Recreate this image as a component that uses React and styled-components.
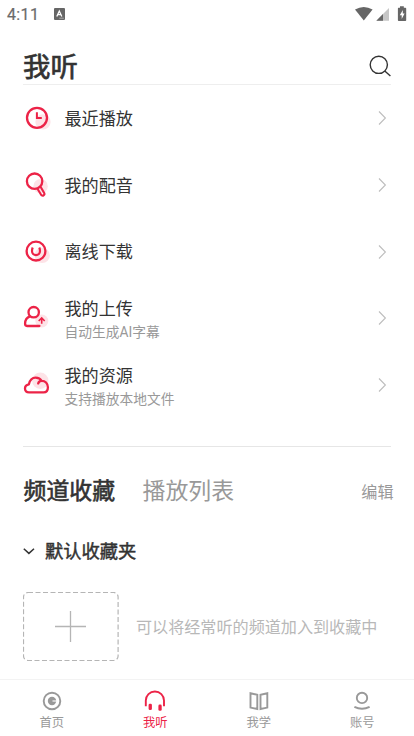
import React, { useState } from 'react'
import styled, { createGlobalStyle } from 'styled-components'

const GlobalStyle = createGlobalStyle`
  * {
    box-sizing: border-box;
  }

  body {
    margin: 0;
    background: #ffffff;
    font-family: Roboto, 'Noto Sans CJK SC', sans-serif;
    color: #333333;
  }

  svg {
    display: block;
    flex: none;
  }

  button {
    border: 0;
    padding: 0;
    background: none;
    font: inherit;
    color: inherit;
    cursor: pointer;
  }
`

const Screen = styled.div`
  display: flex;
  flex-direction: column;
  width: 414px;
  height: 736px;
  overflow: hidden;
`

const StatusBar = styled.div`
  display: flex;
  align-items: center;
  height: 28px;
  padding: 0 7px;
  color: #6b6b6b;
`

const Clock = styled.span`
  width: 47px;
  padding-top: 1px;
  font-size: 16px;
  line-height: 20px;
  letter-spacing: 0.35px;
  -webkit-text-stroke: 0.2px #6b6b6b;
`

const StatusIcons = styled.div`
  display: flex;
  align-items: center;
  margin-left: auto;
`

const Header = styled.header`
  display: flex;
  align-items: center;
  justify-content: space-between;
  height: 57px;
  margin: 0 23px;
  padding-top: 19px;
  border-bottom: 1px solid #eeeeee;
`

const Title = styled.h1`
  margin: 0;
  padding-top: 4px;
  font-size: 27.4px;
  line-height: 34px;
  font-weight: 400;
  -webkit-text-stroke: 0.7px #333333;
`

const Menu = styled.div`
  display: flex;
  flex-direction: column;
  height: 362px;
  margin: 0 23px;
  border-bottom: 1px solid #e6e6e6;
`

const MenuRow = styled.button`
  display: flex;
  align-items: center;
  height: 66.7px;
  text-align: left;
`

const MenuText = styled.div`
  display: flex;
  flex-direction: column;
  flex: 1;
  margin-left: 11.5px;
  padding-top: ${props => (props.$hasNote ? '4px' : '1.4px')};
`

const MenuTitle = styled.span`
  font-size: 17.1px;
  line-height: 24px;
`

const MenuNote = styled.span`
  font-size: 13.75px;
  line-height: 23px;
  color: #999999;
`

const Tabs = styled.div`
  display: flex;
  align-items: center;
  height: 86px;
  padding: 3px 20.5px 0 23.5px;
`

const Tab = styled.button`
  margin-right: 27.5px;
  font-size: 22.9px;
  line-height: 30px;
  color: ${props => (props.$active ? '#333333' : '#999999')};
  -webkit-text-stroke: ${props => (props.$active ? '0.6px #333333' : '0')};
`

const EditButton = styled.button`
  margin-left: auto;
  padding-bottom: 2px;
  font-size: 16.1px;
  color: #999999;
`

const FolderHeader = styled.div`
  display: flex;
  align-items: center;
  gap: 10px;
  height: 35px;
  padding-left: 23px;
`

const FolderName = styled.span`
  padding-top: 2px;
  font-size: 18.3px;
  line-height: 26px;
  -webkit-text-stroke: 0.45px #333333;
`

const EmptyFolder = styled.div`
  display: flex;
  align-items: center;
  gap: 17px;
  margin-top: 24px;
  padding-left: 23px;
  color: #b8b8b8;
`

const Hint = styled.span`
  padding-top: 2px;
  font-size: 16.1px;
  line-height: 24px;
`

const TabBar = styled.nav`
  display: flex;
  height: 57px;
  margin-top: auto;
  border-top: 1px solid #f3f3f3;
`

const TabBarItem = styled.button`
  display: flex;
  flex: 1;
  flex-direction: column;
  align-items: center;
  padding-top: 10px;
  font-size: 12.3px;
  line-height: 18px;
  color: ${props => (props.$active ? '#ec2347' : '#999999')};

  svg {
    margin-bottom: 2px;
  }
`

// Red outline drawing over a soft pink disc
const RowIcon = ({ halo, children }) => (
  <svg width="30" height="30" viewBox="0 0 30 30" fill="none">
    <circle cx={halo[0]} cy={halo[1]} r={halo[2]} fill="#fde3e7" />
    <g
      stroke="#ec2347"
      strokeWidth="2.3"
      strokeLinecap="round"
      strokeLinejoin="round"
    >
      {children}
    </g>
  </svg>
)

const menu = [
  {
    title: '最近播放',
    icon: (
      <RowIcon halo={[20, 18.9, 7.6]}>
        <circle cx="14" cy="14.8" r="10" />
        <path d="M13.9 10.3V15.1H17.8" strokeWidth="2" strokeLinecap="square" strokeLinejoin="miter" />
      </RowIcon>
    )
  },
  {
    title: '我的配音',
    icon: (
      <RowIcon halo={[17.6, 16.2, 7.2]}>
        <circle cx="11.6" cy="11.2" r="7.7" />
        <path d="M14.6 19 18.1 24.7A1.7 1.7 0 0 0 21.2 23.1L18 17.4" strokeWidth="2.1" />
      </RowIcon>
    )
  },
  {
    title: '离线下载',
    icon: (
      <RowIcon halo={[19.2, 18.4, 7.7]}>
        <circle cx="13" cy="14.1" r="9.4" />
        <path
          d="M9.7 10.5Q9 12.1 9 14.1A4 4 0 0 0 17 14.1Q17 12.1 16.3 10.5"
          strokeWidth="2.2"
          strokeLinecap="butt"
        />
      </RowIcon>
    )
  },
  {
    title: '我的上传',
    note: '自动生成AI字幕',
    icon: (
      <RowIcon halo={[18.8, 18, 6.5]}>
        <circle cx="10.7" cy="9.2" r="5.2" />
        <path d="M7 13.4C3.8 14.6 2.1 17.3 2.1 20.5V21.1Q2.1 23 4 23H16.4" />
        <path d="M18.7 20.8V15.4M15.7 18 18.7 15 21.7 18" strokeWidth="1.6" strokeLinecap="butt" strokeLinejoin="miter" />
      </RowIcon>
    )
  },
  {
    title: '我的资源',
    note: '支持播放本地文件',
    icon: (
      <RowIcon halo={[17.3, 10.7, 8.2]}>
        <path d="M6 22.4C3.4 22.4 2 20.8 2 18.6 2 16.2 3.8 14.8 5.8 14.4 6.8 10.2 9.3 7.6 12.6 7.6 15.4 7.6 17.4 8.6 18.6 10.8 22 10.6 24.9 13.4 24.9 17.2 24.9 20.4 23.2 22.4 20.6 22.4ZM18.6 10.8C16.6 11 15.5 12 15.2 13.4" />
      </RowIcon>
    )
  }
]

const tabBar = [
  {
    label: '首页',
    icon: (
      <>
        <circle cx="11" cy="11" r="8.3" />
        <circle cx="11" cy="11" r="4.2" fill="currentColor" stroke="none" />
        <path d="M11.5 11H15.6" stroke="#ffffff" strokeWidth="1.1" />
      </>
    )
  },
  {
    label: '我听',
    icon: (
      <>
        <path d="M1.8 16.3V10.6A9.1 9.1 0 0 1 20 10.6V16.3" />
        <rect x="4.6" y="13.8" width="3.3" height="6.2" rx="1.3" fill="currentColor" stroke="none" />
        <rect x="14.4" y="14.6" width="3.3" height="6.2" rx="1.3" fill="currentColor" stroke="none" />
      </>
    )
  },
  {
    label: '我学',
    icon: (
      <path d="M2.5 3.2 9.3 4.7V19L2.5 17.6ZM19.3 3.2 12.5 4.7V19L19.3 17.6Z" />
    )
  },
  {
    label: '账号',
    icon: (
      <>
        <circle cx="11" cy="7.9" r="5.2" />
        <path d="M3.4 16.9Q11 20.7 18.6 16.9" />
      </>
    )
  }
]

const ChevronRight = () => (
  <svg width="18" height="16" viewBox="0 0 18 16" fill="none" stroke="#bdbdbd" strokeWidth="1.1">
    <path d="M6 1.5 12.4 8 6 14.5" />
  </svg>
)

const App = () => {
  const [activeTab, setActiveTab] = useState('频道收藏')
  const [activePage, setActivePage] = useState('我听')

  return (
    <Screen>
      <GlobalStyle />
      <StatusBar>
        <Clock>4:11</Clock>
        <svg width="11" height="12" viewBox="0 0 11 12">
          <rect width="11" height="12" rx="1" fill="#666666" />
          <path d="M2.8 8.5 5.3 3 7.8 8.5M3.8 6.7H6.8" fill="none" stroke="#ffffff" strokeWidth="1.3" />
          <path d="M5.3 10.2H9.8" stroke="#cccccc" strokeWidth="0.7" />
        </svg>
        <StatusIcons>
          <svg width="52" height="16" viewBox="0 0 52 16" fill="#666666">
            <path d="M0 3.6Q8.7-1.8 17.6 3.6L8.8 14.6Z" />
            <path d="M34 2V14.8H21.3Z" fill="#c6c6c6" />
            <path d="M28 8V14.8H21.3Z" />
            <path d="M43.5 1.8H45V.2H48.8V1.8H50.4Q51.2 1.8 51.2 2.6V14.2Q51.2 15 50.4 15H43.7Q42.9 15 42.9 14.2V2.6Q42.9 1.8 43.5 1.8Z" />
            <path d="M47.8 4 44.8 9.2H46.7V13L49.6 7.6H47.8Z" fill="#ffffff" />
          </svg>
        </StatusIcons>
      </StatusBar>
      <Header>
        <Title>我听</Title>
        <svg width="23" height="22" viewBox="0 0 23 22" fill="none" stroke="#333333" strokeWidth="1.4">
          <circle cx="10.8" cy="9.8" r="8.6" />
          <path d="M16.8 15.9 22.4 21" />
        </svg>
      </Header>
      <Menu>
        {menu.map(item => (
          <MenuRow key={item.title}>
            {item.icon}
            <MenuText $hasNote={Boolean(item.note)}>
              <MenuTitle>{item.title}</MenuTitle>
              {item.note && <MenuNote>{item.note}</MenuNote>}
            </MenuText>
            <ChevronRight />
          </MenuRow>
        ))}
      </Menu>
      <Tabs>
        {['频道收藏', '播放列表'].map(tab => (
          <Tab key={tab} $active={tab === activeTab} onClick={() => setActiveTab(tab)}>
            {tab}
          </Tab>
        ))}
        <EditButton>编辑</EditButton>
      </Tabs>
      <FolderHeader>
        <svg width="12" height="8" viewBox="0 0 12 8" fill="none" stroke="#333333" strokeWidth="1.5">
          <path d="M.8 1.7 5.9 6.4 11 1.7" />
        </svg>
        <FolderName>默认收藏夹</FolderName>
      </FolderHeader>
      <EmptyFolder>
        <svg width="96" height="69" viewBox="0 0 96 69" fill="none" stroke="#b5b5b5">
          <rect x=".5" y=".5" width="94.6" height="68" rx="4.5" strokeDasharray="5 2.5" strokeWidth="1.2" />
          <path d="M32 34.5H63M47.5 19V50" strokeWidth="1.3" />
        </svg>
        <Hint>可以将经常听的频道加入到收藏中</Hint>
      </EmptyFolder>
      <TabBar>
        {tabBar.map(({ label, icon }) => (
          <TabBarItem
            key={label}
            $active={label === activePage}
            onClick={() => setActivePage(label)}
          >
            <svg width="22" height="22" viewBox="0 0 22 22" fill="none" stroke="currentColor" strokeWidth="1.9">
              {icon}
            </svg>
            {label}
          </TabBarItem>
        ))}
      </TabBar>
    </Screen>
  )
}

export default App
